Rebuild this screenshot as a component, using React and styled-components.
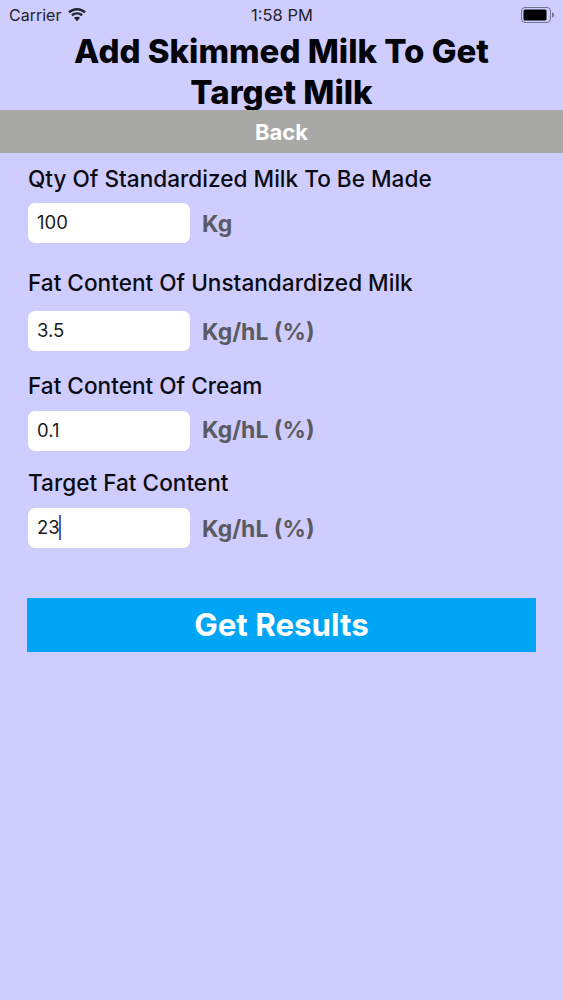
import React from "react";
import styled, { createGlobalStyle } from "styled-components";

const Global = createGlobalStyle`
  html, body { margin: 0; padding: 0; background: #cfcdfe; }
  body { font-family: Inter, "Liberation Sans", sans-serif; }
`;
const Page = styled.div`
  width: 563px; height: 1000px; background: #cfcdfe; overflow: hidden; display: flex; flex-direction: column;
`;
const StatusBar = styled.div`
  height: 30px; display: grid; grid-template-columns: 1fr auto 1fr; align-items: center;
  padding: 0 8px 1px 9px; color: #23232b; font-size: 16px; box-sizing: border-box;
`;
const StatusLeft = styled.div`display: flex; align-items: center; gap: 6px;`;
const StatusRight = styled.div`display: flex; justify-content: flex-end;`;
const Clock = styled.div`font-size: 16.5px;`;
const Title = styled.h1`
  margin: 0; height: 80px; text-align: center; font-size: 33px; line-height: 41px; font-weight: 800;
  color: #03030a; padding: 1px 40px 0; box-sizing: border-box; white-space: pre-line;
`;
const BackBar = styled.div`
  height: 43px; background: #a8a9a6; color: #fff; font-weight: 700; font-size: 22px;
  display: flex; align-items: center; justify-content: center;
`;
const Form = styled.div`display: flex; flex-direction: column; padding: 0 28px;`;
const Label = styled.div`
  font-size: 22.6px; font-weight: 500; color: #0b0b14; line-height: 26px; margin-top: ${p => p.$top}px;
  white-space: nowrap;
`;
const Row = styled.div`display: flex; align-items: center; gap: 12px; margin-top: ${p => p.$top}px;`;
const Field = styled.div`
  width: 162px; height: 40px; background: #fff; border-radius: 7px; box-sizing: border-box; padding: 0 9px 2px;
  display: flex; align-items: center; font-size: 18.5px; color: #1c1c20;
`;
const Caret = styled.span`display: inline-block; width: 2.5px; height: 25px; background: #3d5fd8; margin-left: -1px;`;
const Unit = styled.div`
  font-size: 23px; font-weight: 700; color: #5a5a60; margin-top: ${p => p.$nudge ?? 1}px;
`;
const Submit = styled.div`
  margin: 50px 27px 0; height: 54px; background: #00a6f5; color: #fff; font-size: 31.3px; font-weight: 700;
  display: flex; align-items: center; justify-content: center;
`;

const Wifi = () => (
  <svg width="20" height="15" viewBox="0 0 19 14" fill="#23232b">
    <path d="M9.5 3.2c2.6 0 5 1 6.8 2.7l1.6-1.7C15.7 2.1 12.7.8 9.5.8S3.3 2.1 1.1 4.2l1.6 1.7c1.8-1.7 4.2-2.7 6.8-2.7z" />
    <path d="M9.5 7.1c1.5 0 2.9.6 4 1.6l1.6-1.7c-1.5-1.4-3.4-2.2-5.6-2.2S5.4 5.6 3.9 7l1.6 1.7c1.1-1 2.5-1.6 4-1.6z" />
    <path d="M9.5 13.4l3-3.2c-.8-.7-1.8-1.1-3-1.1s-2.2.4-3 1.1z" />
  </svg>
);
const Battery = () => (
  <svg width="34" height="16" viewBox="0 0 34 16">
    <rect x="0.5" y="0.5" width="29" height="15" rx="3.5" fill="none" stroke="#74738f" />
    <rect x="2.5" y="2.5" width="23" height="11" rx="1.5" fill="#000" />
    <path d="M31 5.5c1.4.3 2 1.2 2 2.5s-.6 2.2-2 2.5z" fill="#74738f" />
  </svg>
);

export default function App() {
  return (
    <Page>
      <Global />
      <StatusBar>
        <StatusLeft>Carrier <Wifi /></StatusLeft>
        <Clock>1:58 PM</Clock>
        <StatusRight><Battery /></StatusRight>
      </StatusBar>
      <Title>{"Add Skimmed Milk To Get\nTarget Milk"}</Title>
      <BackBar>Back</BackBar>
      <Form>
        <Label $top={13}>Qty Of Standardized Milk To Be Made</Label>
        <Row $top={11}><Field>100</Field><Unit $nudge={2}>Kg</Unit></Row>
        <Label $top={27}>Fat Content Of Unstandardized Milk</Label>
        <Row $top={15}><Field>3.5</Field><Unit>Kg/hL (%)</Unit></Row>
        <Label $top={22}>Fat Content Of Cream</Label>
        <Row $top={12}><Field>0.1</Field><Unit $nudge={-2}>Kg/hL (%)</Unit></Row>
        <Label $top={19}>Target Fat Content</Label>
        <Row $top={12}><Field>23<Caret /></Field><Unit>Kg/hL (%)</Unit></Row>
      </Form>
      <Submit>Get Results</Submit>
    </Page>
  );
}
